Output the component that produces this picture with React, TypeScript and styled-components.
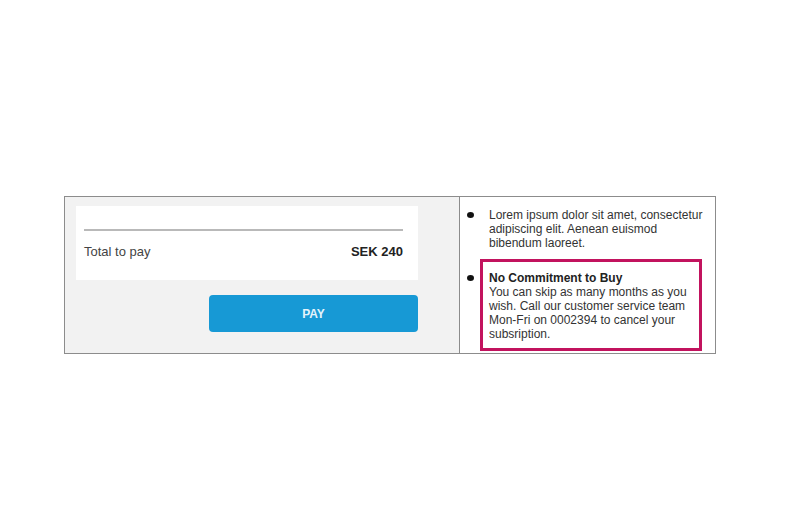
import React from 'react';
import styled, {createGlobalStyle} from "styled-components";

const GlobalStyle = createGlobalStyle`
  html, body {
    margin: 0;
    padding: 0;
    background: #fff;
  }
  body {
    font-family: "Liberation Sans", Arial, sans-serif;
  }
`;

type Item = {
    title?: string;
    text: string;
    highlight?: boolean;
};

const items: Item[] = [
    {text: 'Lorem ipsum dolor sit amet, consectetur adipiscing elit. Aenean euismod bibendum laoreet.'},
    {
        title: 'No Commitment to Buy',
        text: 'You can skip as many months as you wish. Call our customer service team Mon-Fri on 0002394 to cancel your subsription.',
        highlight: true
    },
];

const App = () => {
    return (
        <Page>
            <GlobalStyle/>
            <Frame>
                <PayPanel>
                    <SummaryCard>
                        <Divider/>
                        <TotalRow>
                            <TotalLabel>Total to pay</TotalLabel>
                            <TotalAmount>SEK 240</TotalAmount>
                        </TotalRow>
                    </SummaryCard>
                    <ButtonRow>
                        <PayButton>PAY</PayButton>
                    </ButtonRow>
                </PayPanel>
                <InfoPanel>
                    {items.map((item, i) => (
                        <InfoItem key={i}>
                            <Bullet $highlight={item.highlight}/>
                            <InfoText $highlight={item.highlight}>
                                {item.title && <InfoTitle>{item.title}</InfoTitle>}
                                {item.text}
                            </InfoText>
                        </InfoItem>
                    ))}
                </InfoPanel>
            </Frame>
        </Page>
    );
};

const Page = styled.div`
  width: 790px;
  height: 526px;
  box-sizing: border-box;
  padding: 196px 0 0 64px;
`;

const Frame = styled.div`
  display: flex;
  width: 652px;
  box-sizing: border-box;
  border: 1px solid #8c8c8c;
`;

const PayPanel = styled.div`
  width: 394px;
  box-sizing: border-box;
  padding: 9px 0 21px 11px;
  background-color: #f2f2f2;
`;

const SummaryCard = styled.div`
  width: 342px;
  height: 74px;
  box-sizing: border-box;
  padding: 23px 15px 0 8px;
  background-color: #fff;
`;

const Divider = styled.div`
  height: 2px;
  background-color: #b9b9b9;
`;

const TotalRow = styled.div`
  display: flex;
  justify-content: space-between;
  align-items: center;
  margin-top: 11px;
  height: 18px;
  font-size: 13px;
`;

const TotalLabel = styled.span`
  color: #444;
`;

const TotalAmount = styled.span`
  color: #222;
  font-weight: bold;
`;

const ButtonRow = styled.div`
  display: flex;
  justify-content: flex-end;
  width: 342px;
  margin-top: 15px;
`;

const PayButton = styled.button`
  width: 209px;
  height: 37px;
  border: none;
  border-radius: 4px;
  background-color: #1799d5;
  color: #e4f3fb;
  font-family: "Liberation Sans", Arial, sans-serif;
  font-size: 12px;
  font-weight: bold;
  cursor: pointer;
`;

const InfoPanel = styled.div`
  flex: 1;
  display: flex;
  flex-direction: column;
  gap: 9px;
  box-sizing: border-box;
  padding: 11px 8px 0 7px;
  border-left: 1px solid #8c8c8c;
  background-color: #fff;
`;

const InfoItem = styled.div`
  display: flex;
  align-items: flex-start;
`;

const Bullet = styled.span<{ $highlight?: boolean }>`
  flex: none;
  width: 7px;
  height: 6px;
  margin-top: ${p => p.$highlight ? '16px' : '4px'};
  border-radius: 50%;
  background-color: #111;
`;

const InfoText = styled.div<{ $highlight?: boolean }>`
  font-size: 12px;
  line-height: 14px;
  color: #333;
  margin-left: ${p => p.$highlight ? '6px' : '15px'};
  ${p => p.$highlight ? `
    width: 222px;
    box-sizing: border-box;
    padding: 9px 6px 7px 6px;
    border: 3px solid #c2135e;
  ` : ''}
`;

const InfoTitle = styled.div`
  font-weight: bold;
  color: #222;
`;

export default App;
